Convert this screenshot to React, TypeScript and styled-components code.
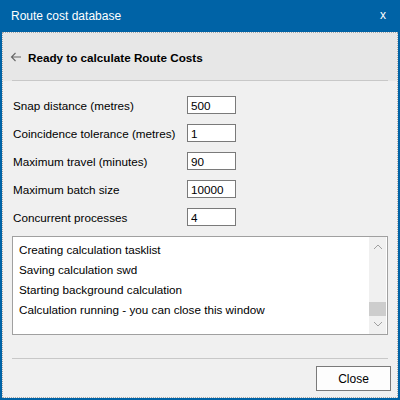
import styled, { createGlobalStyle } from "styled-components";

const Global = createGlobalStyle`
  html, body {
    margin: 0;
    padding: 0;
    width: 400px;
    height: 400px;
    overflow: hidden;
    font-family: "Liberation Sans", Arial, sans-serif;
  }
`;

const fields = [
  { label: "Snap distance (metres)", value: "500" },
  { label: "Coincidence tolerance (metres)", value: "1" },
  { label: "Maximum travel (minutes)", value: "90" },
  { label: "Maximum batch size", value: "10000" },
  { label: "Concurrent processes", value: "4" },
];

const logLines = [
  "Creating calculation tasklist",
  "Saving calculation swd",
  "Starting background calculation",
  "Calculation running - you can close this window",
];

const App = () => {
  return (
    <Window>
      <Global />
      <TitleBar>
        <Title>Route cost database</Title>
        <CloseX>x</CloseX>
      </TitleBar>
      <Body>
        <Header>
          <BackArrow viewBox="0 0 12 10" width="12" height="10">
            <path d="M11 5H1.5M5.5 1L1.5 5l4 4" fill="none" stroke="#666" strokeWidth="1.1" />
          </BackArrow>
          <HeaderText>Ready to calculate Route Costs</HeaderText>
        </Header>
        <Content>
          <Form>
            {fields.map((f) => (
              <Row key={f.label}>
                <Label>{f.label}</Label>
                <Input defaultValue={f.value} />
              </Row>
            ))}
          </Form>
          <LogBox>
            <LogLines>
              {logLines.map((l) => (
                <LogLine key={l}>{l}</LogLine>
              ))}
            </LogLines>
            <ScrollBar>
              <Arrow viewBox="0 0 10 6" width="10" height="6">
                <path d="M1 5l4-4 4 4" fill="none" stroke="#a0a0a0" strokeWidth="1" />
              </Arrow>
              <Track>
                <Thumb />
              </Track>
              <Arrow viewBox="0 0 10 6" width="10" height="6">
                <path d="M1 1l4 4 4-4" fill="none" stroke="#a0a0a0" strokeWidth="1" />
              </Arrow>
            </ScrollBar>
          </LogBox>
        </Content>
        <Footer>
          <Button>Close</Button>
        </Footer>
      </Body>
    </Window>
  );
};

const Window = styled.div`
  width: 400px;
  height: 400px;
  box-sizing: border-box;
  background: #0063a6;
  padding: 0 2px 2px 2px;
  display: flex;
  flex-direction: column;
`;

const TitleBar = styled.div`
  height: 32px;
  flex-shrink: 0;
  display: flex;
  align-items: center;
  justify-content: space-between;
  padding: 0 12px 0 9px;
  color: #ffffff;
  font-size: 12px;
`;

const Title = styled.span`
  margin-top: -1px;
`;

const CloseX = styled.span`
  font-size: 12px;
  margin-top: -2px;
`;

const Body = styled.div`
  flex: 1;
  background: #f0f0f0;
  border: 1px dotted #a8a8a8;
  display: flex;
  flex-direction: column;
  color: #000;
  font-size: 11.7px;
`;

const Header = styled.div`
  height: 48px;
  flex-shrink: 0;
  background: #e7e7e7;
  display: flex;
  align-items: center;
  gap: 6px;
  padding: 0 0 0 7px;
  position: relative;
  &::after {
    content: "";
    position: absolute;
    left: 9px;
    right: 9px;
    bottom: 0;
    height: 1px;
    background: #c8c8c8;
  }
`;

const BackArrow = styled.svg`
  display: block;
`;

const HeaderText = styled.span`
  font-weight: bold;
  font-size: 11.7px;
`;

const Content = styled.div`
  flex: 1;
  display: flex;
  flex-direction: column;
  padding: 15px 9px 0 9px;
`;

const Form = styled.div`
  display: flex;
  flex-direction: column;
  gap: 10px;
`;

const Row = styled.div`
  display: flex;
  align-items: center;
  height: 18px;
`;

const Label = styled.span`
  width: 174px;
  padding-left: 1px;
  white-space: nowrap;
`;

const Input = styled.input`
  width: 49px;
  height: 18px;
  box-sizing: border-box;
  border: 1px solid #7a7a7a;
  background: #fff;
  font-family: inherit;
  font-size: 11.7px;
  padding: 0 3px;
  outline: none;
`;

const LogBox = styled.div`
  margin-top: 10px;
  height: 99px;
  flex-shrink: 0;
  box-sizing: border-box;
  border: 1px solid #a0a0a0;
  background: #fff;
  display: flex;
`;

const LogLines = styled.div`
  flex: 1;
  padding: 3px 6px;
  display: flex;
  flex-direction: column;
`;

const LogLine = styled.div`
  height: 20px;
  line-height: 20px;
`;

const ScrollBar = styled.div`
  width: 17px;
  background: #f0f0f0;
  display: flex;
  flex-direction: column;
  align-items: center;
  padding: 4px 0;
  margin: 0 1px 0 0;
`;

const Arrow = styled.svg`
  display: block;
  margin: 3px 0;
`;

const Track = styled.div`
  flex: 1;
  width: 100%;
  position: relative;
`;

const Thumb = styled.div`
  position: absolute;
  left: 0;
  right: 0;
  top: 49px;
  height: 14px;
  background: #cdcdcd;
`;

const Footer = styled.div`
  flex-shrink: 0;
  margin: 0 9px;
  padding: 7px 5px 6px 0;
  border-top: 1px solid #c8c8c8;
  display: flex;
  justify-content: flex-end;
`;

const Button = styled.button`
  width: 75px;
  height: 25px;
  background: #fdfdfd;
  border: 1px solid #7a7a7a;
  font-family: inherit;
  font-size: 12px;
  color: #000;
  padding: 0;
  margin-right: -8px;
`;

export default App;
